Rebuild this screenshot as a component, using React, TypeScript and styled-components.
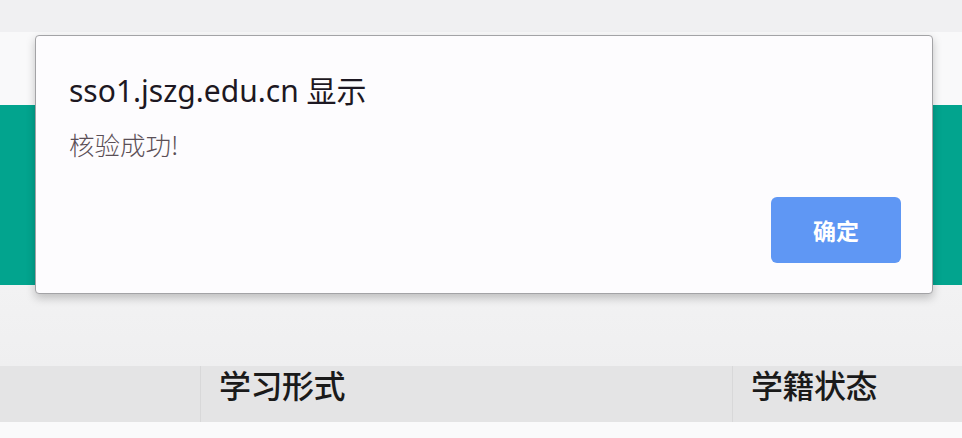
import React from 'react';
import styled, { createGlobalStyle } from 'styled-components';

const GlobalStyle = createGlobalStyle`
  html, body {
    margin: 0;
    padding: 0;
    background: #fafafb;
  }
  body {
    font-family: 'Noto Sans', 'Noto Sans CJK SC', sans-serif;
  }
`;

const Page = styled.div`
  position: relative;
  width: 962px;
  height: 438px;
  overflow: hidden;
  display: flex;
  flex-direction: column;
  background: #fafafb;
`;

const TopBar = styled.div`
  height: 32px;
  background: #f0f0f2;
`;

const WhiteStrip = styled.div`
  height: 73px;
  background: #f9f9fa;
`;

const Banner = styled.div`
  height: 180px;
  background: #02a48e;
`;

const Spacer = styled.div`
  height: 81px;
  background: linear-gradient(#f2f2f3, #efeff0);
`;

const TableHead = styled.div`
  height: 56px;
  display: grid;
  grid-template-columns: 200px 532px 1fr;
  background: #e4e4e5;
`;

const HeadCell = styled.div<{ $divider?: boolean }>`
  display: flex;
  align-items: flex-start;
  padding: 0 0 0 18px;
  border-left: ${(p) => (p.$divider ? '1px solid #d8d8d9' : 'none')};
  font-family: 'Noto Sans CJK SC', sans-serif;
  font-size: 32px;
  font-weight: 500;
  color: #1a1a1a;
  letter-spacing: -0.5px;
  line-height: 36px;
`;

const Dialog = styled.div`
  position: absolute;
  top: 35px;
  left: 35px;
  width: 898px;
  height: 259px;
  box-sizing: border-box;
  border: 1px solid #a3a3a6;
  border-radius: 4px;
  background: #fdfcfe;
  box-shadow: 0 4px 10px rgba(0, 0, 0, 0.22);
  display: flex;
  flex-direction: column;
  padding: 38px 31px 30px 33px;
`;

const Title = styled.div`
  font-family: 'Noto Sans', 'Noto Sans CJK SC', sans-serif;
  font-size: 30px;
  line-height: 34px;
  color: #1d1822;
`;

const Message = styled.div`
  margin-top: 21px;
  font-family: 'Noto Sans CJK SC', sans-serif;
  font-size: 25.5px;
  font-weight: 300;
  line-height: 30px;
  color: #5b4f56;
`;

const Actions = styled.div`
  margin-top: auto;
  display: flex;
  justify-content: flex-end;
`;

const OkButton = styled.button`
  width: 130px;
  height: 66px;
  border: none;
  border-radius: 6px;
  background: #5f97f4;
  color: #ffffff;
  font-family: 'Noto Sans CJK SC', sans-serif;
  font-size: 23px;
  font-weight: 700;
  cursor: pointer;
`;

export default function App() {
  return (
    <Page>
      <GlobalStyle />
      <TopBar />
      <WhiteStrip />
      <Banner />
      <Spacer />
      <TableHead>
        <HeadCell />
        <HeadCell $divider>学习形式</HeadCell>
        <HeadCell $divider>学籍状态</HeadCell>
      </TableHead>

      <Dialog role="alertdialog">
        <Title>sso1.jszg.edu.cn 显示</Title>
        <Message>核验成功!</Message>
        <Actions>
          <OkButton>确定</OkButton>
        </Actions>
      </Dialog>
    </Page>
  );
}
